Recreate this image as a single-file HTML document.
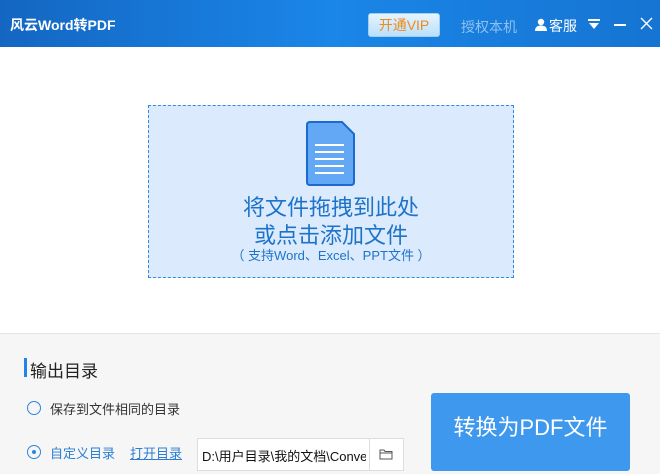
<!DOCTYPE html>
<html><head><meta charset="utf-8"><style>
*{margin:0;padding:0;box-sizing:border-box}
body{width:660px;height:474px;overflow:hidden;font-family:"Liberation Sans","Noto Sans CJK SC",sans-serif;background:#fff;position:relative}
.a{position:absolute;white-space:nowrap}
#top{left:0;top:0;width:660px;height:47px;background:linear-gradient(90deg,#1466c2,#1a86e8 50%,#1674d2)}
</style></head><body>
<div class="a" id="top"></div>
<div class="a" style="left:10px;top:15px;color:#fff;font-size:14px;font-weight:bold">风云Word转PDF</div>
<div class="a" style="left:368px;top:13px;width:72px;height:24px;border-radius:3px;background:linear-gradient(#e6f4ff,#b9e0fb);border:1px solid #9fd0f2;color:#f08a1a;font-size:14px;text-align:center;line-height:22px">开通VIP</div>
<div class="a" style="left:461px;top:17px;color:#8fc1ee;font-size:14px">授权本机</div>
<svg class="a" style="left:535px;top:18px" width="12" height="13" viewBox="0 0 12 13"><circle cx="6" cy="4" r="3.2" fill="#fff"/><path d="M0 13 Q0 7.5 6 7.5 Q12 7.5 12 13Z" fill="#fff"/></svg>
<div class="a" style="left:549px;top:16px;color:#fff;font-size:14px">客服</div>
<svg class="a" style="left:588px;top:18px" width="12" height="12"><rect x="0" y="1" width="12" height="2" fill="#fff"/><path d="M1 5H11L6 11Z" fill="#fff"/></svg>
<div class="a" style="left:614px;top:24px;width:12px;height:1.5px;background:#fff"></div>
<svg class="a" style="left:640px;top:17px" width="13" height="13"><path d="M1 1L12 12M12 1L1 12" stroke="#fff" stroke-width="1.4"/></svg>

<div class="a" style="left:148px;top:105px;width:366px;height:173px;background:#dbebfd;border:1px dashed #2f8ae6"></div>
<svg class="a" style="left:306px;top:121px" width="50" height="66" viewBox="0 0 50 66"><path d="M4 1H36L48 13V61Q48 64 45 64H4Q1 64 1 61V4Q1 1 4 1Z" fill="#63a8f4" stroke="#1a6ad0" stroke-width="2"/><g stroke="#fff" stroke-width="2"><path d="M9 24H38M9 31H38M9 38H38M9 45H38M9 52H38"/></g></svg>
<div class="a" style="left:148px;top:194px;width:366px;text-align:center;color:#1e73c9;font-size:22px;line-height:28px">将文件拖拽到此处<br>或点击添加文件</div>
<div class="a" style="left:148px;top:245px;width:366px;text-align:center;color:#1e73c9;font-size:13px">（ 支持Word、Excel、PPT文件 ）</div>

<div class="a" style="left:0;top:333px;width:660px;height:141px;background:#f6f6f6;border-top:1px solid #e4e4e4"></div>
<div class="a" style="left:24px;top:358px;width:3px;height:19px;background:#1f86e8"></div>
<div class="a" style="left:30px;top:357px;color:#222;font-size:17px">输出目录</div>
<div class="a" style="left:27px;top:401px;width:14px;height:14px;border:1.5px solid #2b86de;border-radius:50%"></div>
<div class="a" style="left:50px;top:399px;color:#333;font-size:13px">保存到文件相同的目录</div>
<div class="a" style="left:27px;top:445px;width:14px;height:14px;border:1.5px solid #2b86de;border-radius:50%"></div>
<div class="a" style="left:32px;top:450px;width:4px;height:4px;background:#2b86de;border-radius:50%"></div>
<div class="a" style="left:50px;top:443px;color:#2b7ed4;font-size:13px">自定义目录</div>
<div class="a" style="left:130px;top:443px;color:#2b7ed4;font-size:13px;text-decoration:underline">打开目录</div>
<div class="a" style="left:197px;top:438px;width:207px;height:33px;background:#fff;border:1px solid #ddd"></div>
<div class="a" style="left:369px;top:438px;width:1px;height:33px;background:#ddd"></div>
<div class="a" style="left:202px;top:446px;width:164px;overflow:hidden;color:#111;font-size:13px">D:\用户目录\我的文档\ConvertPDF</div>
<svg class="a" style="left:379px;top:448px" width="14" height="12"><path d="M1 2H5L6 3.5H13V11H1Z" fill="none" stroke="#555" stroke-width="1"/><path d="M1 5H13" stroke="#555"/></svg>
<div class="a" style="left:431px;top:393px;width:199px;height:78px;background:#3d98ee;border-radius:3px;color:#fff;font-size:22px;text-align:center;line-height:70px">转换为PDF文件</div>
</body></html>
